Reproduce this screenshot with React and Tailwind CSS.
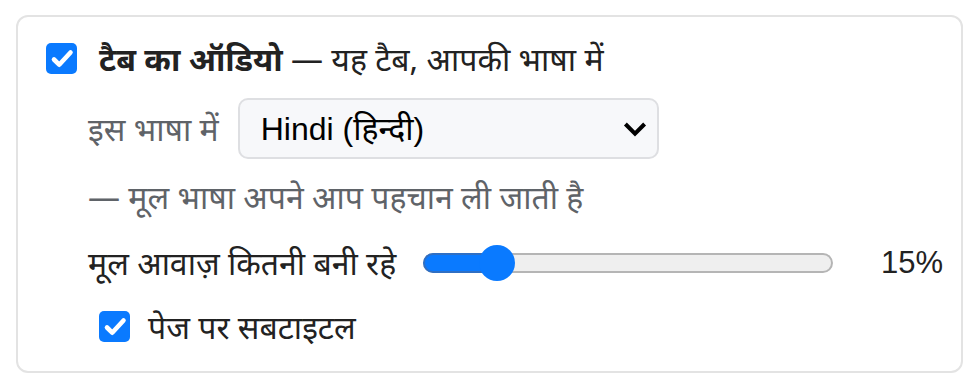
import React from "react";

const CheckBox = () => (
  <span className="flex items-center justify-center w-[31px] h-[31px] rounded-[5px] bg-[#0a7aff] shrink-0">
    <svg className="w-[24px] h-[24px]" viewBox="0 0 24 24" fill="none">
      <path
        d="M4 12.5l5.2 5.2L20.5 5.5"
        stroke="white"
        strokeWidth="4.6"
        strokeLinecap="round"
        strokeLinejoin="round"
      />
    </svg>
  </span>
);

const Slider = ({ value }) => (
  <div className="relative flex-1 h-[36px] flex items-center">
    <div className="relative w-full h-[20px] rounded-full bg-[#efefef] border-2 border-[#b5b5b5]">
      <div
        className="absolute left-[-2px] top-[-2px] bottom-[-2px] rounded-full bg-[#0a7aff] border-2 border-[#2f6fc4]"
        style={{ width: `calc((100% - 36px) * ${value / 100} + 20px)` }}
      />
    </div>
    <div
      className="absolute top-0 w-[36px] h-[36px] rounded-full bg-[#0a7aff]"
      style={{ left: `calc((100% - 36px) * ${value / 100})` }}
    />
  </div>
);

export default function App() {
  return (
    <div
      className="p-[15px] pl-[16px] bg-white"
      style={{ fontFamily: '"Noto Sans", "Noto Sans Devanagari", "Liberation Sans", sans-serif' }}
    >
      <div className="w-[947px] h-[358px] border-2 border-[#e3e3e3] rounded-[12px] pt-[26px] pl-[28px] pr-[18px] flex flex-col">
        <div className="flex items-center h-[31px] gap-[22px]">
          <CheckBox />
          <div className="text-[32px] text-[#222] whitespace-nowrap leading-none">
            <span className="font-bold">टैब का ऑडियो</span> — यह टैब, आपकी भाषा में
          </div>
        </div>

        <div className="flex items-center mt-[24px] pl-[42px] gap-[19px]">
          <span className="text-[32px] text-[#5f6368] whitespace-nowrap">इस भाषा में</span>
          <div className="w-[421px] h-[61px] rounded-[10px] border-2 border-[#dedfe2] bg-[#f7f8fa] flex items-center justify-between pl-[21px] pr-[8px]">
            <span
              className="text-[32px] text-black"
              style={{ fontFamily: '"Liberation Sans", "Noto Sans", sans-serif' }}
            >
              Hindi (हिन्दी)
            </span>
            <svg className="w-[28px] h-[28px]" viewBox="0 0 24 24" fill="none">
              <path d="M5 9l7 7 7-7" stroke="black" strokeWidth="3.5" strokeLinecap="square" />
            </svg>
          </div>
        </div>

        <div className="mt-[20px] pl-[42px] h-[36px] flex items-center text-[32px] text-[#5f6368] whitespace-nowrap">
          — मूल भाषा अपने आप पहचान ली जाती है
        </div>

        <div className="mt-[30px] pl-[42px] h-[36px] flex items-center">
          <span className="text-[32px] text-[#222] whitespace-nowrap mr-[27px]">मूल आवाज़ कितनी बनी रहे</span>
          <Slider value={15} />
          <span
            className="w-[90px] ml-[20px] text-right text-[31px] text-[#222]"
            style={{ fontFamily: '"Liberation Sans", sans-serif' }}
          >
            15%
          </span>
        </div>

        <div className="mt-[30px] pl-[53px] flex items-center h-[31px] gap-[18px]">
          <CheckBox />
          <span className="text-[32px] text-[#222] whitespace-nowrap">पेज पर सबटाइटल</span>
        </div>
      </div>
    </div>
  );
}
